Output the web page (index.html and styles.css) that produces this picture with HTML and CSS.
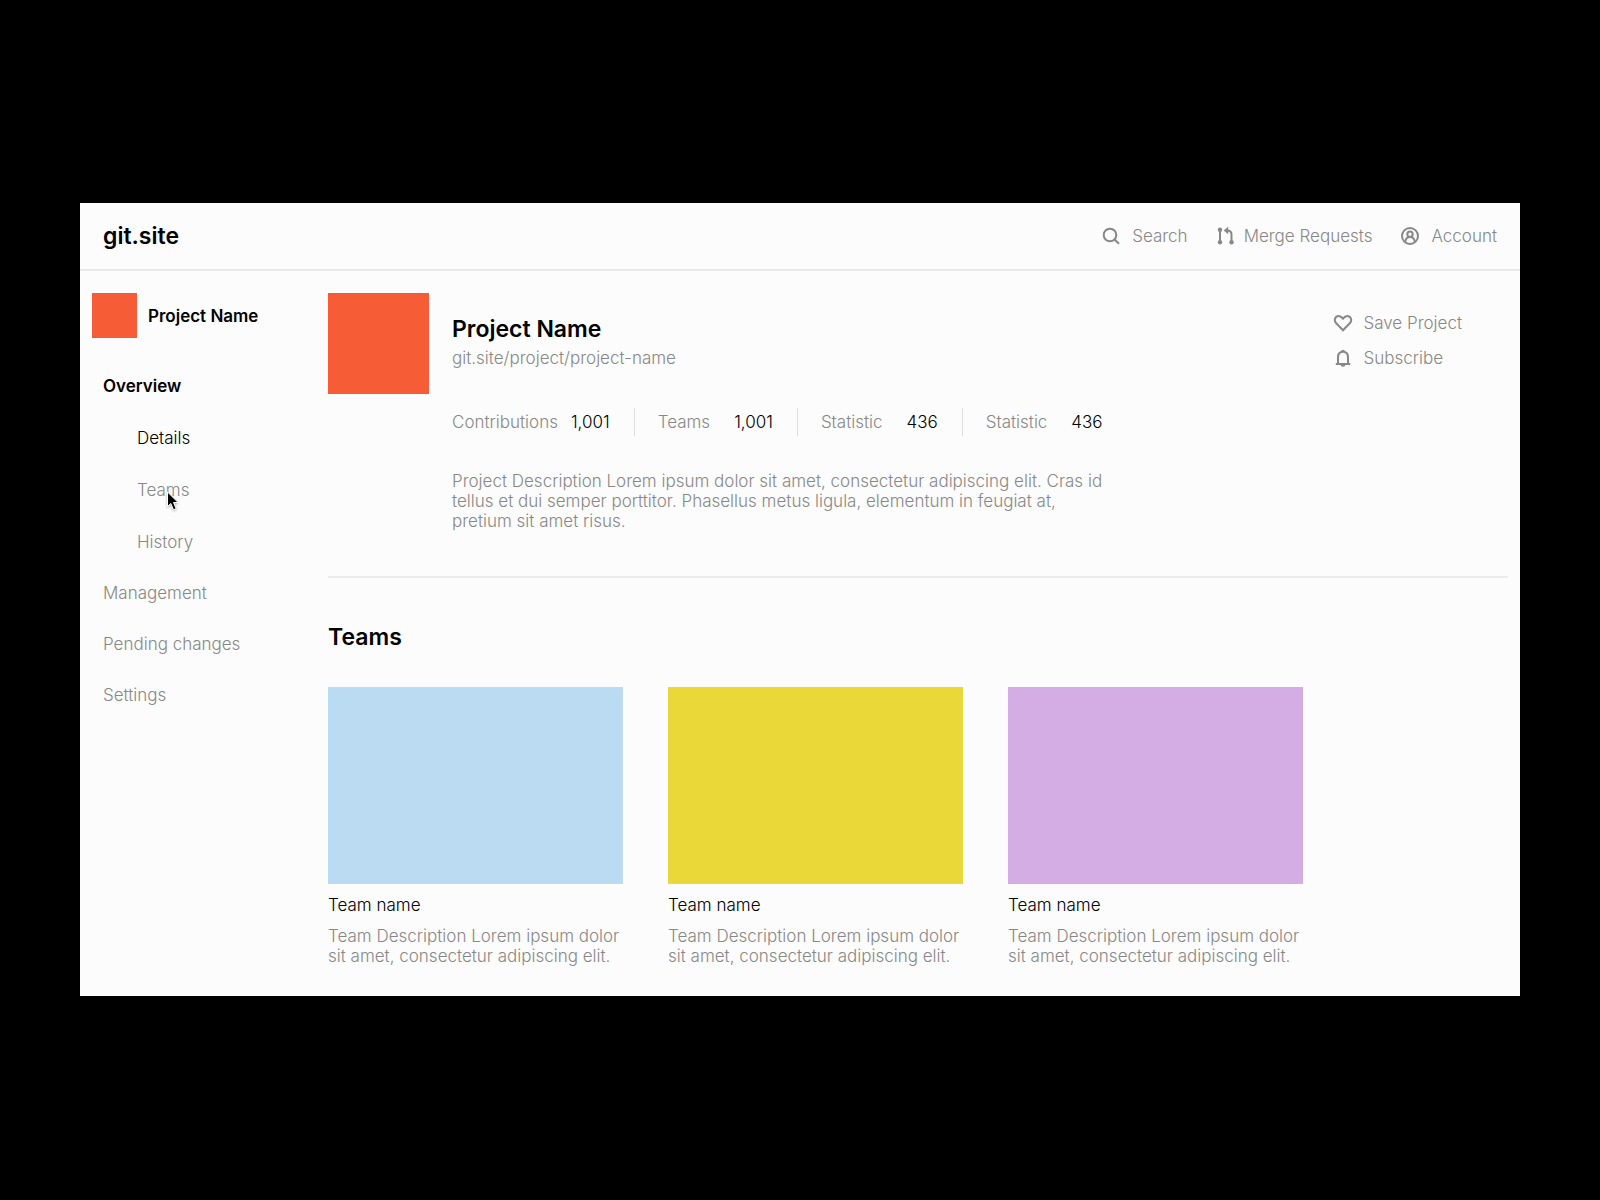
FILE: index.html
```html
<!DOCTYPE html>
<html lang="en">
<head>
    <meta charset="UTF-8">
    <meta name="viewport" content="width=device-width, initial-scale=1.0">
    <title>Project Name - git.site</title>
    <link rel="stylesheet" href="styles.css">
</head>
<body>
    <div class="site">
        <header class="site-header">
            <a class="logo" href="#">git.site</a>
            <nav class="site-nav">
                <a href="#">
                    <svg class="icon" viewBox="0 0 20 20"><circle cx="9" cy="9" r="6.300"/><path d="M13.500 13.500l4.500 4.300"/></svg>
                    Search
                </a>
                <a class="merge-requests" href="#">
                    <svg class="icon" viewBox="0 0 20 20"><path d="M4 4v13M15.500 17V8.500Q15.500 4.500 11 4.500"/><path class="solid" d="M7.700 4.500l4.500-3.700v7.400z"/><circle class="solid" cx="4" cy="3.800" r="2.200"/><circle class="solid" cx="4" cy="16.200" r="2.200"/><circle class="solid" cx="15.500" cy="16.200" r="2.200"/></svg>
                    Merge Requests
                </a>
                <a class="account" href="#">
                    <svg class="icon" viewBox="0 0 20 20"><circle cx="10" cy="10" r="8"/><circle cx="10" cy="8.300" r="2.700"/><path d="M5.200 15.800c.4-3.300 2-4.800 4.800-4.800s4.400 1.500 4.800 4.800"/></svg>
                    Account
                </a>
            </nav>
        </header>

        <div class="columns">
            <aside class="sidebar">
                <div class="sidebar-project">
                    <div class="thumb"></div>
                    <strong>Project Name</strong>
                </div>
                <nav>
                    <ul class="menu">
                        <li><a class="current" href="#">Overview</a>
                            <ul class="submenu">
                                <li><a class="active" href="#">Details</a></li>
                                <li class="hovered">
                                    <a href="#">Teams</a>
                                    <svg class="cursor" viewBox="0 0 14 22"><path d="M1.500 1v14.500l3.300-3 2.700 6.300 2.700-1.200-2.700-6.100h4.600z"/></svg>
                                </li>
                                <li><a href="#">History</a></li>
                            </ul>
                        </li>
                        <li><a href="#">Management</a></li>
                        <li><a href="#">Pending changes</a></li>
                        <li><a href="#">Settings</a></li>
                    </ul>
                </nav>
            </aside>

            <main>
                <section class="project">
                    <div class="thumb"></div>
                    <div class="project-info">
                        <div class="project-title">
                            <h1>Project Name</h1>
                            <a href="#">git.site/project/project-name</a>
                        </div>
                        <dl class="stats">
                            <div class="wide"><dt>Contributions</dt><dd>1,001</dd></div>
                            <div><dt>Teams</dt><dd>1,001</dd></div>
                            <div><dt>Statistic</dt><dd>436</dd></div>
                            <div><dt>Statistic</dt><dd>436</dd></div>
                        </dl>
                        <p>Project Description Lorem ipsum dolor sit amet, consectetur adipiscing elit. Cras id tellus et dui semper porttitor. Phasellus metus ligula, elementum in feugiat at, pretium sit amet risus.</p>
                    </div>
                    <div class="actions">
                        <button type="button">
                            <svg class="icon" viewBox="0 0 20 20"><path d="M10 17.200L3 10C1.200 8.100 1.500 5.300 3.300 3.900 5.300 2.400 8 2.900 10 5.600c2-2.700 4.700-3.200 6.700-1.700 1.800 1.400 2.100 4.200.3 6.100z"/></svg>
                            Save Project
                        </button>
                        <button type="button">
                            <svg class="icon" viewBox="0 0 20 20"><path d="M2.800 16h14.400M5 15.500V9.500C5 6 7 3.700 10 3.700s5 2.300 5 5.800v6"/><path class="solid" d="M8 3.700a2 2 0 0 1 4 0zM7.500 16.500h5a2.500 2.200 0 0 1-5 0z"/></svg>
                            Subscribe
                        </button>
                    </div>
                </section>

                <section class="teams">
                    <h2>Teams</h2>
                    <div class="team-list">
                        <article class="team">
                            <div class="cover blue"></div>
                            <h3>Team name</h3>
                            <p>Team Description Lorem ipsum dolor sit amet, consectetur adipiscing elit.</p>
                        </article>
                        <article class="team">
                            <div class="cover yellow"></div>
                            <h3>Team name</h3>
                            <p>Team Description Lorem ipsum dolor sit amet, consectetur adipiscing elit.</p>
                        </article>
                        <article class="team">
                            <div class="cover purple"></div>
                            <h3>Team name</h3>
                            <p>Team Description Lorem ipsum dolor sit amet, consectetur adipiscing elit.</p>
                        </article>
                    </div>
                </section>
            </main>
        </div>
    </div>
</body>
</html>
```
FILE: styles.css
```css
* {
    box-sizing: border-box;
    margin: 0;
    padding: 0;
}

body {
    display: flex;
    align-items: center;
    min-height: 100vh;
    padding: 0 5% 1px;
    background-color: #000;
    color: #000;
    font: 300 17px/20px Inter, sans-serif;
}

a, button {
    color: #888;
    font: inherit;
    text-decoration: none;
}

button {
    border: 0;
    background: none;
    cursor: pointer;
}

ul {
    list-style: none;
}

h1, h2, .logo {
    font-size: 23px;
    font-weight: 600;
    line-height: 28px;
}

.site {
    flex: 1;
    background-color: #fcfcfc;
}

.site-header {
    display: flex;
    align-items: center;
    justify-content: space-between;
    height: 68px;
    padding: 0 23px;
    border-bottom: 2px solid #e9e9e9;
}

.logo {
    color: #000;
}

.site-nav {
    display: flex;
    gap: 28px;
}

.site-nav a, .actions button {
    display: flex;
    align-items: center;
    gap: 11px;
}

.site-nav .merge-requests {
    gap: 8px;
}

.icon {
    width: 20px;
    height: 20px;
    fill: none;
    stroke: #888;
    stroke-width: 2;
}

.icon .solid {
    fill: #888;
    stroke: none;
}

.columns {
    display: grid;
    grid-template-columns: 236px 1fr;
    padding: 22px 12px 30px;
}

.thumb {
    background-color: #f65c35;
}

.sidebar-project {
    display: flex;
    align-items: center;
    gap: 11px;
}

.sidebar-project .thumb {
    width: 45px;
    height: 45px;
}

.sidebar-project strong {
    font-weight: 600;
}

.menu {
    display: grid;
    gap: 31px;
    padding: 38px 0 0 11px;
}

.submenu {
    display: grid;
    gap: 32px;
    padding: 32px 0 0 34px;
}

.menu .current {
    color: #000;
    font-weight: 600;
}

.menu .active {
    color: #000;
}

.hovered {
    position: relative;
}

/* pointer sits on top of the hovered item */
.cursor {
    position: absolute;
    top: 11px;
    left: 29px;
    width: 14px;
    height: 22px;
    fill: #000;
    stroke: #fff;
    stroke-width: 1;
    filter: drop-shadow(0 1px 1px rgba(0, 0, 0, 0.3));
}

.project {
    display: flex;
    align-items: flex-start;
    gap: 23px;
    padding-bottom: 45px;
    border-bottom: 2px solid #ececec;
}

.project .thumb {
    flex: none;
    width: 101px;
    height: 101px;
}

.project-info {
    max-width: 664px;
}

.project-title {
    display: grid;
    gap: 5px;
    padding-top: 22px;
}

.stats {
    display: flex;
    padding: 40px 0 35px;
}

.stats div {
    display: flex;
    align-items: center;
    gap: 24px;
    height: 28px;
    padding: 0 24px 0 23px;
    border-left: 1px solid #ddd;
}

.stats .wide {
    gap: 13px;
    padding-left: 0;
    border-left: 0;
}

.stats dt, .project p, .team p {
    color: #888;
}

.actions {
    display: grid;
    gap: 15px;
    margin-left: auto;
    padding: 20px 46px 0 0;
}

.actions button {
    gap: 10px;
}

.teams h2 {
    padding: 45px 0 36px;
}

.team-list {
    display: grid;
    grid-template-columns: repeat(3, minmax(0, 295px));
    gap: 45px;
}

.cover {
    aspect-ratio: 295 / 197;
}

.blue {
    background-color: #bbdbf2;
}

.yellow {
    background-color: #ead839;
}

.purple {
    background-color: #d4ade4;
}

.team h3 {
    padding: 11px 0;
    font-size: 17px;
    font-weight: 300;
}
```
